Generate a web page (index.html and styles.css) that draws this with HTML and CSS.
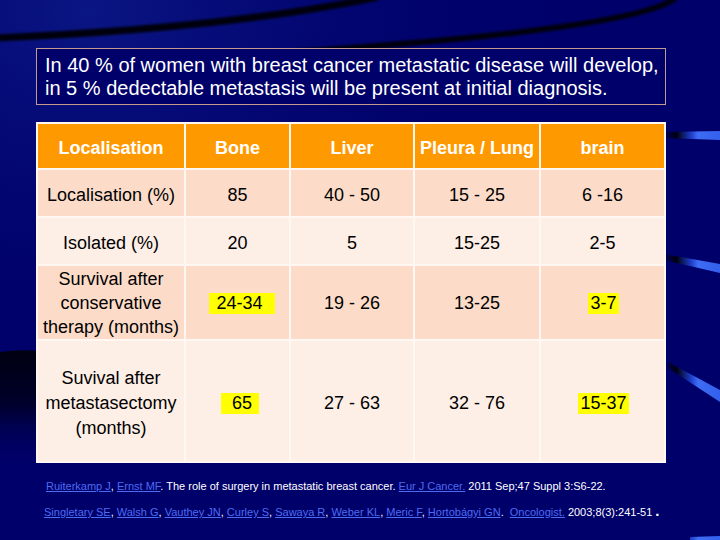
FILE: index.html
```html
<!DOCTYPE html>
<html lang="en">
<head>
<meta charset="utf-8">
<title>Breast cancer metastasis</title>
<link rel="stylesheet" href="styles.css">
</head>
<body>
<div class="slide">
  <svg class="bg" viewBox="0 0 720 540" width="720" height="540" aria-hidden="true">
    <defs>
      <radialGradient id="glow" cx="0.12" cy="0.02" r="0.7">
        <stop offset="0" stop-color="#0a1684"/>
        <stop offset="1" stop-color="#00006a" stop-opacity="0"/>
      </radialGradient>
      <linearGradient id="ray" gradientUnits="userSpaceOnUse" x1="662" y1="0" x2="720" y2="0">
        <stop offset="0" stop-color="#000010" stop-opacity="0"/>
        <stop offset="0.25" stop-color="#000010"/>
        <stop offset="0.5" stop-color="#1d3cc8"/>
        <stop offset="0.62" stop-color="#3f6cf4"/>
        <stop offset="1" stop-color="#3360ec"/>
      </linearGradient>
      <linearGradient id="leftdark" x1="0" y1="0" x2="0" y2="1">
        <stop offset="0" stop-color="#000010"/>
        <stop offset="0.45" stop-color="#00002c"/>
        <stop offset="1" stop-color="#00006a" stop-opacity="0"/>
      </linearGradient>
      <filter id="soft" x="-10%" y="-50%" width="120%" height="200%"><feGaussianBlur stdDeviation="1.3"/></filter>
    </defs>
    <rect width="720" height="540" fill="#00006a"/>
    <rect width="720" height="540" fill="url(#glow)"/>
    <path d="M-5,38 Q230,28 378,-3" stroke="#00000c" stroke-width="7" fill="none" filter="url(#soft)"/>
    <path d="M200,58 Q642,32 676,-3" stroke="#00000c" stroke-width="6" fill="none" filter="url(#soft)"/>
    <path d="M0,352 Q20,349 40,351 L40,470 L0,470 Z" fill="url(#leftdark)"/>
    <path d="M0,133 L40,133" stroke="#00003a" stroke-width="3" filter="url(#soft)"/>
    <path d="M0,183 L40,183" stroke="#00004a" stroke-width="3" filter="url(#soft)"/>
    <polygon points="664,132 720,131 720,140 664,138" fill="url(#ray)"/>
    <polygon points="664,254 720,264 720,273 664,260" fill="url(#ray)"/>
    <polygon points="668,362 720,390 720,402 668,368" fill="url(#ray)"/>
    <polygon points="690,537 720,536 720,541 690,541" fill="url(#ray)"/>
  </svg>

  <div class="content">
    <div class="intro">
      In 40 % of women with breast cancer metastatic disease will develop,<br>
      in 5 % dedectable metastasis will be present at initial diagnosis.
    </div>

    <table class="data">
      <colgroup>
        <col class="c1"><col class="c2"><col class="c3"><col class="c4"><col class="c5">
      </colgroup>
      <tr class="head">
        <td>Localisation</td><td>Bone</td><td>Liver</td><td>Pleura / Lung</td><td>brain</td>
      </tr>
      <tr class="r1 dark">
        <td>Localisation (%)</td><td>85</td><td>40 - 50</td><td>15 - 25</td><td>6 -16</td>
      </tr>
      <tr class="r2 light">
        <td>Isolated (%)</td><td>20</td><td>5</td><td>15-25</td><td>2-5</td>
      </tr>
      <tr class="r3 dark">
        <td>Survival after<br>conservative<br>therapy (months)</td>
        <td><span class="hl hl-bone1">24-34</span></td>
        <td>19 - 26</td><td>13-25</td>
        <td><span class="hl hl-brain1">3-7</span></td>
      </tr>
      <tr class="r4 light">
        <td>Suvival after<br>metastasectomy<br>(months)</td>
        <td><span class="hl hl-bone2">65</span></td>
        <td>27 - 63</td><td>32 - 76</td>
        <td><span class="hl hl-brain2">15-37</span></td>
      </tr>
    </table>

    <div class="refs">
      <p class="ref ref1"><a href="#">Ruiterkamp J</a>, <a href="#">Ernst MF</a>. The role of surgery in metastatic breast cancer. <a href="#">Eur J Cancer.</a> 2011 Sep;47 Suppl 3:S6-22.</p>
      <p class="ref ref2"><a href="#">Singletary SE</a>, <a href="#">Walsh G</a>, <a href="#">Vauthey JN</a>, <a href="#">Curley S</a>, <a href="#">Sawaya R</a>, <a href="#">Weber KL</a>, <a href="#">Meric F</a>, <a href="#">Hortobágyi GN</a>.&nbsp; <a href="#">Oncologist.</a> 2003;8(3):241-51 <b class="bigdot">.</b></p>
    </div>
  </div>
</div>
</body>
</html>
```

FILE: styles.css
```css
* { box-sizing: border-box; }

html, body {
  margin: 0;
  padding: 0;
  background: #00006a;
}

.slide {
  position: relative;
  width: 720px;
  height: 540px;
  overflow: hidden;
  font-family: "Liberation Sans", Arial, sans-serif;
}

.bg {
  position: absolute;
  left: 0;
  top: 0;
  display: block;
}

.content {
  position: relative;
  display: flex;
  flex-direction: column;
  align-items: flex-start;
  padding: 48px 0 0 36px;
}

.intro {
  width: 630px;
  border: 1px solid #c49a8c;
  padding: 5px 0 4px 8px;
  color: #ffffff;
  font-size: 20px;
  line-height: 23px;
  white-space: nowrap;
  background: #00006a;
}

.data {
  margin-top: 17px;
  width: 630px;
  table-layout: fixed;
  border-collapse: separate;
  border-spacing: 2px;
  background: #fff7f1;
  font-size: 18px;
  line-height: 25px;
  color: #000;
}

.c1 { width: 146px; }
.c2 { width: 103px; }
.c3 { width: 122px; }
.c4 { width: 124px; }
.c5 { width: 123px; }

.data td {
  padding: 4px 1px 0 1px;
  text-align: center;
  vertical-align: middle;
  white-space: nowrap;
}

.head td {
  background: #ff9900;
  color: #ffffff;
  font-weight: bold;
}

.dark td { background: #fcdcc9; }
.light td { background: #fdeee6; }

.head { height: 44px; }
.r1 { height: 46px; }
.r2 { height: 46px; }
.r3 { height: 73px; }
.r4 { height: 120px; }

.r3 td {
  padding-top: 1px;
  line-height: 24px;
}

.hl {
  display: inline-block;
  background: #ffff00;
  line-height: 21px;
}
.hl-bone1 { padding: 0 12px 0 7px; margin-left: 9px; }
.hl-bone2 { padding: 0 7px 0 11px; margin-left: 5px; }
.hl-brain1 { padding: 0 2px; margin-left: 2px; }
.hl-brain2 { padding: 0 2px; margin-left: 2px; }

.refs {
  margin-top: 10px;
  color: #ffffff;
  font-size: 11px;
  line-height: 26px;
}

.ref {
  margin: 0;
  white-space: nowrap;
}
.ref1 { padding-left: 10px; }
.ref2 { padding-left: 8px; }

.ref a {
  color: #4d6cf2;
  text-decoration: underline;
}

.bigdot {
  font-size: 15px;
  line-height: 10px;
}
```
